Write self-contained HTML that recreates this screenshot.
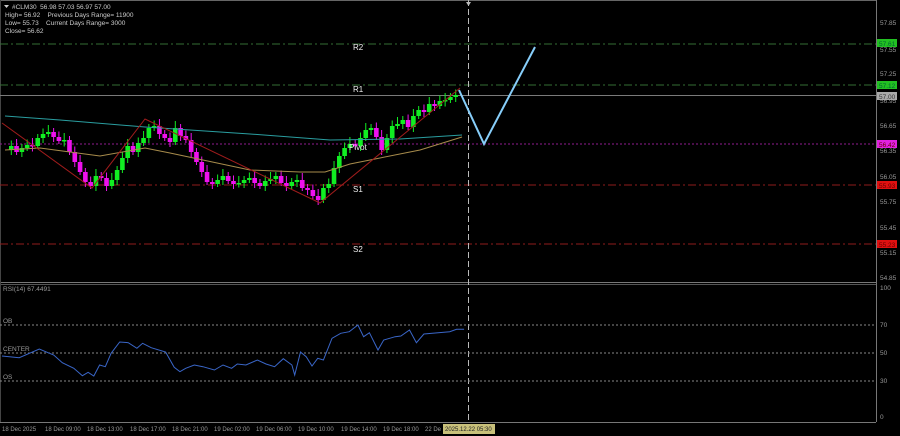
<!DOCTYPE html>
<html><head><meta charset="utf-8"><style>
body{margin:0;background:#000;width:900px;height:436px;overflow:hidden;font-family:"Liberation Sans",sans-serif}
svg{display:block}
text{font-family:"Liberation Sans",sans-serif}
</style></head><body>
<svg id="s" width="900" height="436" xmlns="http://www.w3.org/2000/svg">
<rect width="900" height="436" fill="#000"/>
<line x1="0" y1="0.5" x2="876" y2="0.5" stroke="#666"/>
<line x1="876.5" y1="0" x2="876.5" y2="422" stroke="#777"/>
<line x1="0" y1="282.5" x2="876" y2="282.5" stroke="#777"/>
<line x1="0" y1="284.5" x2="876" y2="284.5" stroke="#555"/>
<line x1="0" y1="422.5" x2="876" y2="422.5" stroke="#777"/>
<line x1="0.5" y1="0" x2="0.5" y2="422" stroke="#444"/>
<line x1="0" y1="44" x2="876" y2="44" stroke="#356e35" stroke-dasharray="8,3,2,3"/>
<line x1="0" y1="85" x2="876" y2="85" stroke="#356e35" stroke-dasharray="8,3,2,3"/>
<line x1="0" y1="95.5" x2="876" y2="95.5" stroke="#7a7a7a"/>
<line x1="0" y1="144" x2="876" y2="144" stroke="#901c90" stroke-dasharray="2,2"/>
<line x1="0" y1="185" x2="876" y2="185" stroke="#901c1c" stroke-dasharray="8,3,2,3"/>
<line x1="0" y1="244" x2="876" y2="244" stroke="#901c1c" stroke-dasharray="8,3,2,3"/>
<line x1="468.5" y1="0" x2="468.5" y2="422" stroke="#bbb" stroke-dasharray="6,3"/>
<path d="M466 2 L471 2 L468.5 6Z" fill="#bbb"/>
<g id="cand"></g>
<polyline fill="none" stroke="#2a9ea0" stroke-width="1" points="5,116 60,120 145,127 250,134 330,140 400,139 462,135"/>
<polyline fill="none" stroke="#a88c4c" stroke-width="1" points="5,150 40,148 100,156 145,148 170,153 250,170 300,172 325,172 350,164 380,158 420,150 462,137"/>
<polyline fill="none" stroke="#a01c1c" stroke-width="1" points="2,123 92,188 145,119 320,203 460,88"/>
<polyline fill="none" stroke="#87cefa" stroke-width="2" points="459,90 484,144 535,47"/>
<g fill="#eee" font-size="8">
<text x="353" y="50">R2</text><text x="353" y="92">R1</text><text x="349" y="150">Pivot</text><text x="353" y="192">S1</text><text x="353" y="252">S2</text>
</g>
<g fill="#ccc" font-size="6.5">
<path d="M4 5 L9 5 L6.5 8Z" fill="#ccc"/>
<text x="12" y="9">#CLM30&#160;&#160;56.98 57.03 56.97 57.00</text>
<text x="5" y="17">High= 56.92&#160;&#160;&#160;&#160;Previous Days Range= 11900</text>
<text x="5" y="25">Low= 55.73&#160;&#160;&#160;&#160;Current Days Range= 3000</text>
<text x="5" y="33">Close= 56.62</text>
</g>
<g fill="#999" font-size="6.5">
<text x="880" y="25">57.85</text><text x="880" y="52">57.55</text><text x="880" y="76">57.25</text><text x="880" y="103">56.95</text>
<text x="880" y="128">56.65</text><text x="880" y="153">56.35</text><text x="880" y="179">56.05</text><text x="880" y="204">55.75</text>
<text x="880" y="230">55.45</text><text x="880" y="255">55.15</text><text x="880" y="280">54.85</text>
<text x="880" y="290">100</text><text x="880" y="327">70</text><text x="880" y="355">50</text><text x="880" y="383">30</text><text x="880" y="419">0</text>
</g>
<g font-size="6.5">
<rect x="877" y="39" width="20" height="8" fill="#22c022"/><text x="879" y="46" fill="#063">57.61</text>
<rect x="877" y="81" width="20" height="8" fill="#22c022"/><text x="879" y="88" fill="#063">57.12</text>
<rect x="877" y="92" width="20" height="8" fill="#aaa"/><text x="879" y="99" fill="#333">57.00</text>
<rect x="877" y="140" width="20" height="8" fill="#e020e0"/><text x="879" y="147" fill="#600">56.42</text>
<rect x="877" y="181" width="20" height="8" fill="#e01010"/><text x="879" y="188" fill="#600">55.93</text>
<rect x="877" y="240" width="20" height="8" fill="#e01010"/><text x="879" y="247" fill="#600">55.23</text>
</g>
<g stroke="#888" stroke-dasharray="2,2"><line x1="0" y1="325" x2="876" y2="325"/><line x1="0" y1="353" x2="876" y2="353"/><line x1="0" y1="381" x2="876" y2="381"/></g>
<g fill="#999" font-size="6.5"><text x="3" y="291">RSI(14) 67.4491</text><text x="3" y="323">OB</text><text x="3" y="351">CENTER</text><text x="3" y="379">OS</text></g>
<polyline id="rsi" fill="none" stroke="#3a66c8" stroke-width="1"/>
<g fill="#999" font-size="6"><text x="2" y="431">18 Dec 2025</text><text x="45" y="431">18 Dec 09:00</text><text x="87" y="431">18 Dec 13:00</text><text x="130" y="431">18 Dec 17:00</text><text x="172" y="431">18 Dec 21:00</text><text x="214" y="431">19 Dec 02:00</text><text x="256" y="431">19 Dec 06:00</text><text x="298" y="431">19 Dec 10:00</text><text x="341" y="431">19 Dec 14:00</text><text x="383" y="431">19 Dec 18:00</text><text x="425" y="431">22 De</text></g>
<rect x="443" y="424" width="52" height="10" fill="#c8c07a"/><text x="445" y="431" font-size="6" fill="#222">2025.12.22 05:30</text>
</svg>
<script>
var c=[150,146,152,148,145,146,138,134,132,137,141,140,152,162,172,182,186,176,178,186,180,170,158,146,152,143,138,128,126,134,138,142,128,136,140,152,162,172,182,184,180,176,181,184,183,180,178,183,186,181,179,176,183,186,182,180,188,190,196,200,188,184,168,156,148,144,146,138,130,128,137,150,138,126,124,120,127,116,110,112,104,106,101,100,97,95];
var g=document.getElementById('cand'),n=c.length,dx=455/n,h='';
for(var i=1;i<n;i++){var o=c[i-1],cl=c[i],x=6+i*dx,up=cl<o,col=up?'#11ee22':'#ee11ee';
var t=Math.min(o,cl),b=Math.max(o,cl);if(b-t<1.5)b=t+1.5;
h+='<line x1="'+x+'" x2="'+x+'" y1="'+(t-4-(i%3)*1.5)+'" y2="'+(b+3+(i%2)*2)+'" stroke="'+col+'"/>';
h+='<rect x="'+(x-2.3)+'" y="'+t+'" width="4.6" height="'+(b-t)+'" fill="'+col+'"/>';}
g.innerHTML=h;
var r=[0,228,30,233,65,207,90,225,105,248,125,265,140,287,150,277,160,288,170,255,180,260,190,220,205,186,220,188,235,205,245,190,260,203,285,216,300,262,310,275,320,265,335,255,350,260,370,270,385,255,400,265,410,252,425,255,445,240,460,252,475,260,490,236,505,255,510,285,520,216,530,230,540,258,550,235,560,240,575,175,590,160,605,155,620,135,630,170,640,158,655,210,665,180,685,170,695,168,710,150,722,188,735,162,760,158,780,155,792,148,805,148];
var p='';for(var j=0;j<r.length;j+=2)p+=(r[j]*0.574+2).toFixed(1)+','+(280+r[j+1]/3).toFixed(1)+' ';
document.getElementById('rsi').setAttribute('points',p);
</script>
</body></html>
